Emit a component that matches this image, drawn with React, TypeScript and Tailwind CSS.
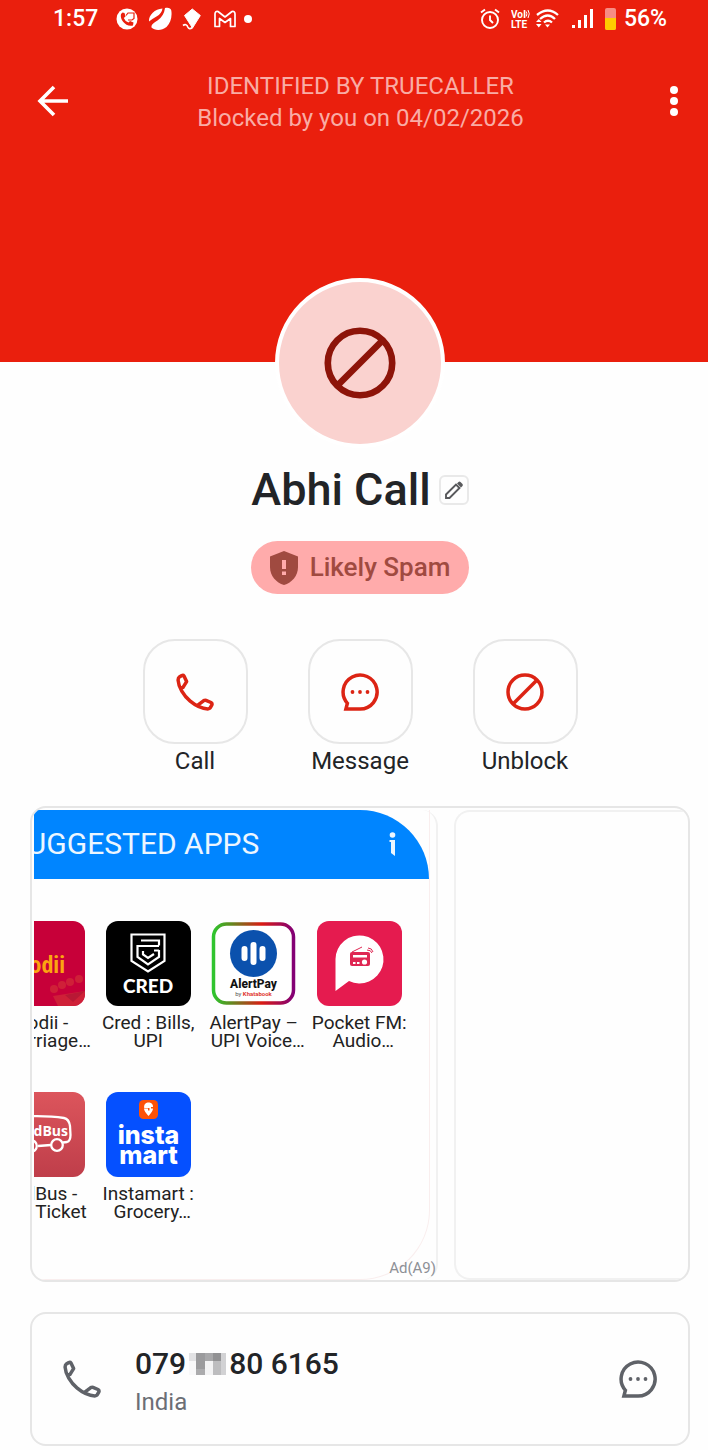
import type { ReactNode } from "react";

function PhoneIcon() {
  return (
    <svg viewBox="0 0 38 38" className="size-[38px]" fill="none" stroke="currentColor" strokeWidth="3.5" strokeLinejoin="round" aria-hidden="true">
      <path d="M6.4 15.4 10.6 8.6 8 3Q7.2 1.9 5.8 2.6L3.6 3.8Q2 4.8 2.1 7.2C2.5 14 7.500 22.600 14.200 28.200C20 33 27.500 35.800 31.800 35.900Q33.900 35.900 34.600 34.200L35.900 31.800Q36.400 30.300 35 29.500L30 27.300Q28.900 26.900 27.800 27.600L21.800 32.200" />
    </svg>
  );
}

function ChatIcon() {
  return (
    <svg viewBox="0 0 38 38" className="size-[38px]" fill="none" stroke="currentColor" strokeWidth="3.5" aria-hidden="true">
      <path d="M19 36H4.900L6.400 30.300A17 17 0 1 1 19 36Z" />
      <g fill="currentColor" stroke="none">
        <circle cx="11.500" cy="19" r="1.900" />
        <circle cx="19" cy="19" r="1.900" />
        <circle cx="26.500" cy="19" r="1.900" />
      </g>
    </svg>
  );
}

function BlockIcon({ className }: { className: string }) {
  return (
    <svg viewBox="0 0 38 38" className={className} fill="none" stroke="currentColor" strokeWidth="3.5" aria-hidden="true">
      <circle cx="19" cy="19" r="17" />
      <path d="M7 31 31 7" />
    </svg>
  );
}

function StatusBar() {
  return (
    <div className="flex h-[38px] items-center justify-between pr-[41px] pl-[53px] text-[23px] font-medium">
      <div className="flex items-center">
        <span>1:57</span>
        <svg viewBox="0 0 22 22" className="ml-[18px] size-[22px]" aria-hidden="true">
          <circle cx="11" cy="11" r="10.500" fill="#fff" />
          <path d="M6.500 4.500 8.500 5 9.500 8.500 7.800 10Q9 13.500 12.500 14.500L14 13 17.500 14.500 17 17.500C10 19.500 3.500 11.500 5 6Z" fill="#ea1f0d" />
          <path d="M10 7.500 12 5H18V10.500L16 12H12" fill="none" stroke="#ea1f0d" strokeWidth="1.200" />
        </svg>
        <svg viewBox="0 0 24 24" className="ml-[10px] size-6" aria-hidden="true">
          <path d="M1 14.500C.500 8 7 2 14.500 1.500C14 5 12 7.500 8.500 9.500Q4 12 1 14.500Z" fill="#fff" />
          <path d="M17 1C20 .3 22.800.8 23.300 3.500C24.300 10 22.500 16 18.500 20C13.500 24 6.500 23.500 3.500 20.500C3 17.500 6 15.500 9.500 13.500Q16 9 17 1Z" fill="#fff" />
        </svg>
        <svg viewBox="0 0 20 22" className="ml-[10px] h-[22px] w-5" aria-hidden="true">
          <path d="M10.300 1 18.300 7.500 10.500 20 2.500 7.500Z" fill="#fff" stroke="#fff" strokeWidth="1" strokeLinejoin="round" />
          <path d="M10.500 19.500Q7 22 5.800 19C5 16.500 3 16 1 17.500" fill="none" stroke="#fff" strokeWidth="1.700" />
        </svg>
        <svg viewBox="0 0 22 18" className="ml-3 h-[18px] w-[22px]" fill="none" stroke="#fff" strokeWidth="1.700" strokeLinejoin="round" aria-hidden="true">
          <path d="M1 4Q1 1 4 1.500L11 7 18 1.500Q21 1 21 4V16.500H16.500V8.500L11 12.500 5.500 8.500V16.500H1Z" />
        </svg>
        <span className="ml-2 size-2 rounded-full bg-white" />
      </div>
      <div className="flex items-center">
        <svg viewBox="0 0 20 22" className="h-[22px] w-5" fill="none" stroke="#fff" strokeWidth="1.900" aria-hidden="true">
          <circle cx="10" cy="12" r="8" />
          <path d="M10 7.500V12L13 15M1 4.500 5 1.500M19 4.500 15 1.500" />
        </svg>
        <svg viewBox="0 0 19 20" className="ml-[11px] h-5 w-[19px]" fill="none" stroke="#fff" strokeWidth="1.700" aria-hidden="true">
          <text x="0" y="9" fontSize="10" fontWeight="700" fill="#fff" stroke="none">Vo</text>
          <path d="M13.500 1V9" />
          <path d="M15.300 2.500Q16.500 4.500 15.300 7.500M17 1Q19.500 4.500 17 9" strokeWidth="1" />
          <text x="0" y="19" fontSize="10" fontWeight="700" fill="#fff" stroke="none">LTE</text>
        </svg>
        <svg viewBox="0 0 23 20" className="ml-[6px] h-5 w-[23px]" fill="none" stroke="#fff" strokeWidth="2.300" aria-hidden="true">
          <path d="M1 6Q12-3 22 6M4 10Q12 3 19 10M8 13.500Q12 10 16 13.500" />
          <path d="M9 15.500H14L11.500 18.500ZM0 13 2.800 10 5.500 13ZM0 15H5.500L2.800 18.500Z" fill="#fff" stroke="none" />
        </svg>
        <svg viewBox="0 0 22 20" className="ml-[13px] h-5 w-[22px]" fill="#fff" aria-hidden="true">
          <path d="M0 16H3V19H0ZM6 11H9V19H6ZM12 6H15V19H12ZM18 0H21V19H18Z" />
        </svg>
        <span className="ml-[11px] flex h-[22px] w-[11px] flex-col overflow-hidden rounded-xs bg-[#f78c84]">
          <span className="mt-auto h-3 bg-[#ffcc00]" />
        </span>
        <span className="ml-2">56%</span>
      </div>
    </div>
  );
}

function Action({ label, children }: { label: string; children: ReactNode }) {
  return (
    <button type="button" className="flex w-[105px] flex-col items-center">
      <span className="flex h-[105px] w-full items-center justify-center rounded-[32px] border-2 border-[#e7e7e7] text-[#dc2414]">{children}</span>
      <span className="mt-[3px] text-[24px] leading-7">{label}</span>
    </button>
  );
}

function AppTile({ lines, children }: { lines: [string, string]; children: ReactNode }) {
  return (
    <a href="#" className="flex flex-col items-center text-center text-[19px] leading-[18px] whitespace-nowrap text-[#222]">
      <span className="mb-2 size-[85px] overflow-hidden rounded-[12px]">{children}</span>
      <span>{lines[0]}</span>
      <span className={lines[1].endsWith("…") ? "pl-2" : ""}>{lines[1]}</span>
    </a>
  );
}

function JodiiLogo() {
  return (
    <svg viewBox="0 0 85 85" className="size-full" aria-hidden="true">
      <rect width="85" height="85" fill="#c70039" />
      <g fill="#cf2038">
        <circle cx="54" cy="68" r="4" /><circle cx="62" cy="64" r="4" /><circle cx="70" cy="61" r="4" /><circle cx="79" cy="58" r="4" />
        <path d="M53 75 85 70V85H58Z" />
      </g>
      <path d="M65 74 85 70 73 81Z" fill="#b81835" />
      <text x="65" y="52" textAnchor="end" fontSize="24" fontWeight="800" fontFamily="Open Sans Condensed, Open Sans, sans-serif" fill="#fca510">Jodii</text>
    </svg>
  );
}

function CredLogo() {
  return (
    <svg viewBox="0 0 85 85" className="size-full" aria-hidden="true">
      <rect width="85" height="85" fill="#000" />
      <g fill="none" stroke="#fff" strokeWidth="2.200">
        <path d="M25.500 13.500H58.500V40L42 50.500 25.500 40Z" />
        <path d="M35 19.500H53V24.500M53 29.500H48M53 29V36L42 43.500 31.500 36V25H53" />
        <path d="M37 30V33.500L42 37 48 33" />
      </g>
      <text x="42" y="72" textAnchor="middle" fontSize="19" fontWeight="900" fontFamily="Lato, sans-serif" fill="#fff">CRED</text>
    </svg>
  );
}

function AlertPayLogo() {
  return (
    <svg viewBox="0 0 85 85" className="size-full" aria-hidden="true">
      <defs>
        <linearGradient id="alertpay-ring">
          <stop offset="0" stopColor="#2fc52f" /><stop offset=".2" stopColor="#5c8f20" /><stop offset=".6" stopColor="#d91b13" /><stop offset="1" stopColor="#830075" />
        </linearGradient>
      </defs>
      <rect x="2.500" y="3" width="80" height="79" rx="13" fill="#fff" stroke="url(#alertpay-ring)" strokeWidth="3.500" />
      <circle cx="42.500" cy="32.500" r="23.500" fill="#0b51ad" />
      <path d="M33.500 28V37M42.500 24V41M51.500 28V37" stroke="#fff" strokeWidth="6" strokeLinecap="round" />
      <text x="42.500" y="67" textAnchor="middle" fontSize="12" fontWeight="800" fill="#111">AlertPay</text>
      <text x="42.500" y="75" textAnchor="middle" fontSize="6" fill="#555">by <tspan fill="#e13a35" fontWeight="700">Khatabook</tspan></text>
    </svg>
  );
}

function PocketLogo() {
  return (
    <svg viewBox="0 0 85 85" className="size-full" aria-hidden="true">
      <rect width="85" height="85" fill="#e51b4f" />
      <path d="M18.500 70V38A24 24 0 1 1 32 60Z" fill="#fff" />
      <rect x="33" y="31" width="20" height="14" rx="2" fill="#df2652" />
      <path d="M35 31 45 26M50 29Q54 29 55 32M51 27Q55 27 56 31" stroke="#df2652" strokeWidth="1" fill="none" />
      <path d="M36 34H50V36.500H36ZM36 41H38.500V43H36ZM40 41H42.500V43H40Z" fill="#fff" />
      <circle cx="47.500" cy="41" r="2.600" fill="#fff" />
    </svg>
  );
}

function RedBusLogo() {
  return (
    <svg viewBox="0 0 85 85" className="size-full" aria-hidden="true">
      <defs>
        <linearGradient id="redbus-fill" x2="0" y2="1"><stop stopColor="#dc555c" /><stop offset="1" stopColor="#bf3e4a" /></linearGradient>
      </defs>
      <rect width="85" height="85" fill="url(#redbus-fill)" />
      <g fill="none" stroke="#fff" strokeWidth="2.300">
        <path d="M14 25Q45 23 64 26Q69 27 70 34L70.500 43Q70.500 49 67 50L63 50.500M51 53 38 54M25 54H14" />
        <circle cx="57" cy="53" r="5.800" /><circle cx="31" cy="54" r="5.800" />
      </g>
      <text x="68" y="44" textAnchor="end" fontSize="14" fontWeight="700" fontFamily="Open Sans, sans-serif" fill="#fff">redBus</text>
    </svg>
  );
}

function InstamartLogo() {
  return (
    <svg viewBox="0 0 85 85" className="size-full" aria-hidden="true">
      <rect width="85" height="85" fill="#0550ff" />
      <rect x="33" y="8" width="19" height="19" rx="4.500" fill="#fc5208" />
      <path d="M42.500 24Q38 19 38 16.500H42V18.500H43.500V16H38.200C37 9 47.500 9 47 15H45V16.500H47Q47 19 42.500 24Z" fill="#fff" />
      <g fill="#fff" fontFamily="Inter, sans-serif" fontWeight="800" fontSize="25" textAnchor="middle">
        <text x="42.500" y="52">insta</text>
        <text x="42.500" y="72">mart</text>
      </g>
    </svg>
  );
}

function SuggestedApps() {
  return (
    <section aria-label="Suggested apps" className="overflow-hidden rounded-[16px] border-2 border-[#e6e6e6] pt-[2px] pl-[2px]">
      <div className="flex gap-4 overflow-hidden">
        <div className="relative -ml-[44px] w-[448px] shrink-0 rounded-[16px] border-r-2 border-[#f1f1f1] pr-[6px]">
          <div className="h-[470px] rounded-br-[70px] border-r border-b border-[#f9eeee]">
            <header className="flex h-[69px] items-center justify-between rounded-tr-[70px] bg-[#0085ff] pr-[33px] pb-[2px] pl-[19px] text-[#ecf6ff]">
              <h2 className="text-[30px]">SUGGESTED APPS</h2>
              <button type="button" aria-label="Ad information">
                <svg viewBox="0 0 8 24" className="h-6 w-2" fill="currentColor" aria-hidden="true">
                  <circle cx="4.500" cy="3" r="2.800" />
                  <path d="M1.500 8H7V24L3 21V10H1.500Z" />
                </svg>
              </button>
            </header>
            <div className="mt-[42px] grid w-[422px] grid-cols-4 gap-y-[42px]">
              <AppTile lines={["Jodii -", "Marriage…"]}><JodiiLogo /></AppTile>
              <AppTile lines={["Cred : Bills,", "UPI"]}><CredLogo /></AppTile>
              <AppTile lines={["AlertPay –", "UPI Voice…"]}><AlertPayLogo /></AppTile>
              <AppTile lines={["Pocket FM:", "Audio…"]}><PocketLogo /></AppTile>
              <AppTile lines={["redBus -", "Bus Ticket"]}><RedBusLogo /></AppTile>
              <AppTile lines={["Instamart :", "Grocery…"]}><InstamartLogo /></AppTile>
            </div>
          </div>
          <span className="absolute right-0 bottom-[2px] text-[15px] leading-5 text-[#8d9096]">Ad(A9)</span>
        </div>
        <div className="min-w-0 flex-1 rounded-l-[16px] border-2 border-r-0 border-[#f1f1f1]" />
      </div>
    </section>
  );
}

function PhoneNumber() {
  return (
    <section className="flex h-[134px] items-center rounded-[16px] border-2 border-[#e6e6e6] px-[31px] text-[#5f6268]">
      <button type="button" aria-label="Call number"><PhoneIcon /></button>
      <div className="ml-[34px] flex-1 pt-[6px]">
        <p className="flex items-center text-[30px] leading-9 font-medium text-[#222427]">
          079
          <svg viewBox="0 0 37 22" className="mx-[3px] h-[22px] w-[37px]" shapeRendering="crispEdges" aria-label="Hidden digits">
            <path d="M0 0H7V8H0Z" fill="#e2e2e4" />
            <path d="M7 0H16V16H7Z" fill="#9b9b9d" />
            <path d="M16 0H24V8H16Z" fill="#a8a8aa" />
            <path d="M24 0H32V8H24Z" fill="#929294" />
            <path d="M32 0H37V22H32Z" fill="#d2d2d4" />
            <path d="M0 8H7V22H0Z" fill="#f8f8f9" />
            <path d="M7 16H16V22H7Z" fill="#ababad" />
            <path d="M16 8H24V22H16Z" fill="#f3f3f4" />
            <path d="M24 8H32V22H24Z" fill="#bdbdbf" />
          </svg>
          80 6165
        </p>
        <p className="mt-1 text-[24px] leading-8 text-[#6c6e75]">India</p>
      </div>
      <button type="button" aria-label="Message number"><ChatIcon /></button>
    </section>
  );
}

export default function App() {
  return (
    <div className="min-h-screen bg-[#fefefe] pb-1 font-['Roboto',sans-serif] text-[#222427]">
      <header className="bg-[#ea1f0d] pb-[230px] text-white">
        <StatusBar />
        <div className="mt-[31px] flex h-[63px] items-center justify-between pl-[37px]">
          <button type="button" aria-label="Back">
            <svg viewBox="0 0 32 32" className="size-8" fill="none" stroke="currentColor" strokeWidth="3.600" aria-hidden="true">
              <path d="M31 16H4M17 2 3 16 17 30" />
            </svg>
          </button>
          <div className="pt-[2px] pl-3 text-center text-[24px] leading-8 text-[#f9aca5]">
            <p>IDENTIFIED BY TRUECALLER</p>
            <p>Blocked by you on 04/02/2026</p>
          </div>
          <button type="button" aria-label="More options" className="flex w-[68px] flex-col items-center gap-[3px]">
            <span className="size-2 rounded-full bg-white" />
            <span className="size-2 rounded-full bg-white" />
            <span className="size-2 rounded-full bg-white" />
          </button>
        </div>
      </header>

      <main className="pr-[18px] pl-[30px]">
        <div className="flex flex-col items-center">
          <div className="-mt-[84px] flex size-[170px] items-center justify-center rounded-full border-4 border-white bg-[#fad2cf] text-[#8d1409]">
            <BlockIcon className="size-[72px]" />
          </div>
          <div className="mt-4 flex items-center gap-2">
            <h1 className="text-[45px] leading-[52px] font-medium">Abhi Call</h1>
            <button type="button" aria-label="Edit name" className="flex size-[30px] items-center justify-center rounded-md border-2 border-[#e9e9e9] text-[#58595c]">
              <svg viewBox="0 0 20 20" className="size-5" aria-hidden="true">
                <path d="M2 14.500V18H5.500L15.500 8 12 4.500Z" fill="none" stroke="currentColor" strokeWidth="1.900" />
                <path d="M13 3.500 14.500 2Q15.500 1 16.500 2L18.500 4Q19.300 5 18.500 6L17 7.500Z" fill="currentColor" />
              </svg>
            </button>
          </div>
          <div className="mt-[25px] flex h-[53px] items-center gap-3 rounded-full bg-[#ffabab] px-[19px] text-[26px] font-medium text-[#a04a40]">
            <svg viewBox="0 0 28 34" className="h-[34px] w-7" aria-hidden="true">
              <path d="M14 0 28 5.500V16C28 25 22 31.500 14 34C6 31.500 0 25 0 16V5.500Z" fill="currentColor" />
              <path d="M12 9H16V18H12ZM12 20.500H16V24H12Z" fill="#ffabab" />
            </svg>
            Likely Spam
          </div>
          <div className="mt-[45px] flex gap-[60px]">
            <Action label="Call"><PhoneIcon /></Action>
            <Action label="Message"><ChatIcon /></Action>
            <Action label="Unblock"><BlockIcon className="size-[38px]" /></Action>
          </div>
        </div>
        <div className="mt-[31px] flex flex-col gap-[30px]">
          <SuggestedApps />
          <PhoneNumber />
        </div>
      </main>
    </div>
  );
}
